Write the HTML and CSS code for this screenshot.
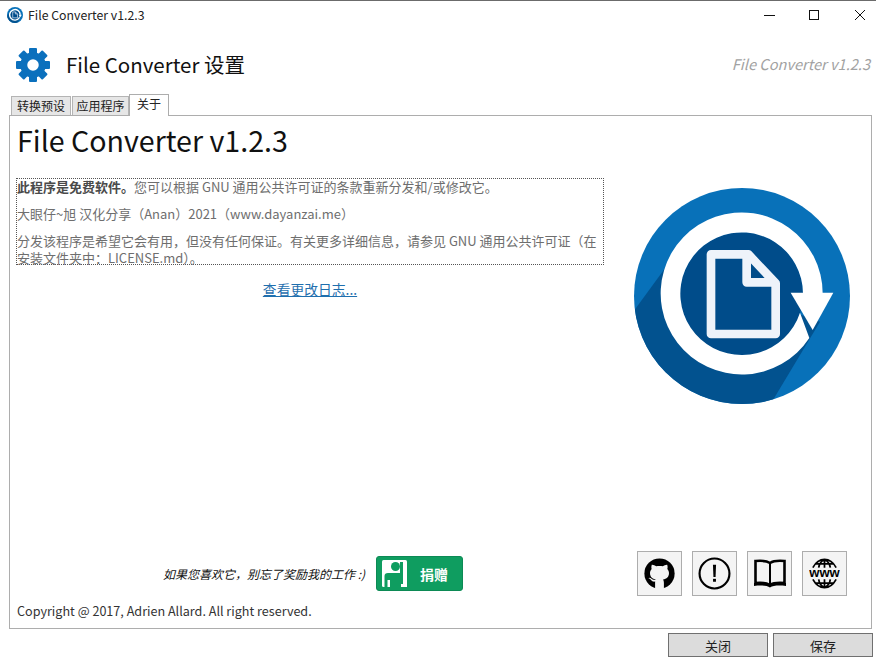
FILE: index.html
```html
<!DOCTYPE html>
<html lang="zh">
<head>
<meta charset="utf-8">
<title>File Converter v1.2.3</title>
<link rel="stylesheet" href="styles.css">
</head>
<body>
<svg class="defs" width="0" height="0" aria-hidden="true">
  <defs>
    <clipPath id="disc"><circle cx="366" cy="363" r="324"/></clipPath>
    <symbol id="logo" viewBox="42 39 648 648">
      <circle cx="366" cy="363" r="324" fill="#0871b9"/>
      <polygon clip-path="url(#disc)" points="135,280 40,410 40,690 450,690 600,440 365,356" fill="#02528f"/>
      <circle cx="365" cy="356" r="184" fill="#004c8a"/>
      <path d="M608 356 A243 243 0 1 0 568 489 L540 413 A184 184 0 1 1 549 356 Z" fill="#fff"/>
      <polygon points="512,353 640,353 578,465" fill="#fff"/>
      <path d="M273 238 H385 L467 325 V477 H273 Z" fill="#004c8a" stroke="#eef3fa" stroke-width="26" stroke-linejoin="round"/>
      <path d="M380 238 V322 H467" fill="none" stroke="#eef3fa" stroke-width="26" stroke-linejoin="round"/>
    </symbol>
  </defs>
</svg>
<div class="window">
  <div class="titlebar">
    <svg class="app-icon"><use href="#logo"/></svg>
    <span class="title-text">File Converter v1.2.3</span>
    <div class="controls">
      <svg class="ctrl" viewBox="0 0 12 12"><path d="M0 6.500H11" stroke="#111" fill="none"/></svg>
      <svg class="ctrl" viewBox="0 0 12 12"><rect x="0.500" y="1.500" width="9" height="9" stroke="#111" fill="none"/></svg>
      <svg class="ctrl" viewBox="0 0 12 12"><path d="M1 1L11 11M11 1L1 11" stroke="#111" fill="none"/></svg>
    </div>
  </div>
  <header class="header">
    <svg class="gear" viewBox="0 0 34 34">
      <g fill="#0b70bd">
        <rect x="13" y="0" width="8" height="7" rx="1"/>
        <rect x="13" y="0" width="8" height="7" rx="1" transform="rotate(45 17 17)"/>
        <rect x="13" y="0" width="8" height="7" rx="1" transform="rotate(90 17 17)"/>
        <rect x="13" y="0" width="8" height="7" rx="1" transform="rotate(135 17 17)"/>
        <rect x="13" y="0" width="8" height="7" rx="1" transform="rotate(180 17 17)"/>
        <rect x="13" y="0" width="8" height="7" rx="1" transform="rotate(225 17 17)"/>
        <rect x="13" y="0" width="8" height="7" rx="1" transform="rotate(270 17 17)"/>
        <rect x="13" y="0" width="8" height="7" rx="1" transform="rotate(315 17 17)"/>
      </g>
      <circle cx="17" cy="17" r="9.250" fill="none" stroke="#0b70bd" stroke-width="7"/>
    </svg>
    <h1 class="header-title">File Converter 设置</h1>
    <span class="header-version">File Converter v1.2.3</span>
  </header>
  <nav class="tabs">
    <span class="tab first">转换预设</span>
    <span class="tab second">应用程序</span>
    <span class="tab active">关于</span>
  </nav>
  <main class="panel">
    <div class="about">
      <div class="about-left">
        <h2 class="heading">File Converter v1.2.3</h2>
        <div class="notice">
          <p class="line"><b>此程序是免费软件。</b>您可以根据 GNU 通用公共许可证的条款重新分发和/或修改它。</p>
          <p class="line">大眼仔~旭 汉化分享（Anan）2021（www.dayanzai.me）</p>
          <p class="line para">分发该程序是希望它会有用，但没有任何保证。有关更多详细信息，请参见 GNU 通用公共许可证（在<br>安装文件夹中：LICENSE.md）。</p>
        </div>
        <a class="changelog" href="#">查看更改日志...</a>
      </div>
      <svg class="logo"><use href="#logo"/></svg>
    </div>
    <div class="actions">
      <span class="donate-text">如果您喜欢它，别忘了奖励我的工作 :)</span>
      <button class="donate">
        <svg class="donate-icon" viewBox="0 0 25 27">
          <rect width="25" height="27" rx="1.500" fill="#fff"/>
          <circle cx="13.500" cy="6.500" r="4.500" fill="#0f9d60"/>
          <path d="M2.500 27V16Q2.500 13 6 13H18V2H21V24H19V27Z" fill="#0f9d60"/>
          <rect x="5.500" y="20" width="2.500" height="7" fill="#fff"/>
          <rect x="21" y="24" width="4" height="3" fill="#fff"/>
        </svg>
        <span>捐赠</span>
      </button>
      <div class="icon-buttons">
        <button class="icon-btn">
          <svg viewBox="0 0 24 24" class="ico">
            <circle cx="12" cy="12" r="11" fill="#000"/>
            <path fill="#f4f4f4" d="M6.400 5.600C7.400 5.500 8.700 6.100 9.600 6.800C10.400 6.600 11.200 6.500 12 6.500C12.800 6.500 13.600 6.600 14.400 6.800C15.300 6.100 16.600 5.500 17.600 5.600C18 6.700 18 7.800 17.700 8.700C18.500 9.600 18.900 10.600 18.900 11.700C18.900 14.600 17.200 16 14.600 16.400C15 17 15.200 17.800 15.200 18.800V24H8.800V18.800C8.800 18.500 8.800 18.200 8.900 17.900C7.500 18.200 6.500 17.600 5.900 16.800C5.300 16 4.700 15.600 4 15.700C4.400 14.800 5.400 15.200 6 15.700C6.600 16.300 7.600 16.800 9.200 16.600L9.400 16.400C6.800 16 5.100 14.600 5.100 11.700C5.100 10.600 5.500 9.600 6.300 8.700C6 7.800 6 6.700 6.400 5.600Z"/>
          </svg>
        </button>
        <button class="icon-btn">
          <svg viewBox="0 0 34 34" class="ico">
            <circle cx="17" cy="17" r="15.400" fill="none" stroke="#000" stroke-width="2.200"/>
            <path d="M15.400 8H18.600L18.100 20.500H15.900Z" fill="#000"/>
            <rect x="15.500" y="22.500" width="3" height="3" fill="#000"/>
          </svg>
        </button>
        <button class="icon-btn">
          <svg viewBox="0 0 34 30" class="ico book">
            <path d="M17 4C14 2 8 1.500 2.500 2V24C8 23.500 14 24 17 26C20 24 26 23.500 31.500 24V2C26 1.500 20 2 17 4Z" fill="none" stroke="#000" stroke-width="2.600"/>
            <path d="M17 4V27" stroke="#000" stroke-width="2"/>
            <path d="M1 24V27C8 26 14 26.500 17 28.500C20 26.500 26 26 33 27V24C26 23.500 20 24 17 26C14 24 8 23.500 1 24Z" fill="#000"/>
          </svg>
        </button>
        <button class="icon-btn">
          <svg viewBox="0 0 32 32" class="ico www">
            <path d="M4 10C7 4.500 11 1.500 16 1.500C21 1.500 25 4.500 28 10M4 22C7 27.500 11 30.500 16 30.500C21 30.500 25 27.500 28 22M16 1.500V10M16 22V30.500M10 10C10.500 6 13 3 16 1.500C19 3 21.500 6 22 10M10 22C10.500 26 13 29 16 30.500C19 29 21.500 26 22 22M7 6H25M7 26H25" fill="none" stroke="#000" stroke-width="1.800"/>
            <text x="16" y="20" text-anchor="middle" class="www-text">www</text>
          </svg>
        </button>
      </div>
    </div>
    <p class="copyright">Copyright @ 2017, Adrien Allard. All right reserved.</p>
  </main>
  <footer class="footer">
    <button class="btn">关闭</button>
    <button class="btn">保存</button>
  </footer>
</div>
</body>
</html>
```

FILE: styles.css
```css
* { box-sizing: border-box; }
html, body { margin: 0; padding: 0; background: #fff; }
body {
  font-family: "Noto Sans CJK SC", "Noto Sans", sans-serif;
  color: #111;
}
.defs { display: block; height: 0; }
.window {
  width: 876px;
  height: 660px;
  display: flex;
  flex-direction: column;
  border-top: 1px solid #6b6b6b;
  overflow: hidden;
}
.titlebar {
  height: 28px;
  display: flex;
  align-items: center;
  padding-left: 7px;
  flex: none;
}
.app-icon { width: 16px; height: 16px; }
.title-text { margin-left: 5px; font-size: 12.300px; color: #222; }
.controls {
  margin-left: auto;
  display: flex;
  gap: 33px;
  padding-right: 10px;
}
.ctrl { width: 12px; height: 12px; display: block; overflow: visible; }
.header {
  flex: none;
  height: 66px;
  display: flex;
  align-items: center;
  padding: 6px 6px 0 16px;
}
.gear { width: 34px; height: 34px; flex: none; }
.header-title {
  margin: 0 0 2px 16px;
  font-size: 20.500px;
  font-weight: 400;
  color: #111;
}
.header-version {
  margin: 0 0 4px auto;
  font-size: 14.600px;
  font-style: italic;
  color: #a2a2a2;
}
.tabs {
  flex: none;
  height: 20px;
  display: flex;
  align-items: flex-end;
  padding-left: 11px;
  position: relative;
  z-index: 1;
}
.tab {
  height: 19px;
  margin-right: 1px;
  background: #e6e6e6;
  border: 1px solid #b4b4b4;
  border-bottom: 0;
  font-size: 12px;
  line-height: 18px;
  color: #222;
  text-align: center;
}
.tab.first { width: 60px; }
.tab.second { width: 57px; margin-right: 0; }
.tab.active {
  height: 22px;
  width: 40px;
  margin: 0 0 -1px 0;
  background: #fff;
  border-color: #adadad;
  line-height: 17px;
}
.panel {
  flex: none;
  width: 863px;
  height: 514px;
  margin-left: 9px;
  border: 1px solid #adadad;
  background: #fff;
  display: flex;
  flex-direction: column;
  padding: 0 0 0 6px;
}
.about { display: flex; flex: 1; }
.about-left { width: 588px; flex: none; }
.heading {
  margin: 4px 0 0 1px;
  font-size: 28.600px;
  line-height: 40px;
  font-weight: 400;
  color: #111;
}
.notice {
  margin-top: 18px;
  height: 87px;
  border: 1px dotted #555;
  font-size: 13px;
  color: #6e6e6e;
}
.line { margin: 0; line-height: 17px; padding-bottom: 10px; white-space: nowrap; }
.line:first-child { margin-top: -1px; }
.line b { color: #4a4a4a; font-weight: 700; }
.line.para { padding-bottom: 0; }
.changelog {
  display: block;
  text-align: center;
  margin: 15px 0 0 2px;
  width: 584px;
  font-size: 13.800px;
  line-height: 19px;
  color: #1f6fae;
  text-decoration: underline;
}
.logo { width: 216px; height: 216px; margin: 72px 0 0 30px; flex: none; }
.actions {
  display: flex;
  align-items: center;
  height: 45px;
  flex: none;
}
.donate-text {
  margin-left: 147px;
  font-size: 12px;
  font-style: italic;
  color: #111;
  width: 213px;
  white-space: nowrap;
}
.donate {
  width: 87px;
  height: 35px;
  margin: 0;
  border: 1px solid #0c8a55;
  border-radius: 3px;
  background: #0f9d60;
  color: #fff;
  font: 700 14px "Noto Sans CJK SC", sans-serif;
  display: flex;
  align-items: center;
  padding: 0 0 0 5px;
  gap: 13px;
}
.donate-icon { width: 25px; height: 27px; flex: none; }
.icon-buttons { display: flex; gap: 10px; margin-left: 174px; }
.icon-btn {
  width: 45px;
  height: 45px;
  padding: 0;
  border: 1px solid #adadad;
  background: #f4f4f4;
  display: flex;
  align-items: center;
  justify-content: center;
}
.ico { width: 33px; height: 33px; display: block; }
.ico.book { width: 34px; height: 30px; }
.ico.www { width: 31px; height: 31px; }
.www-text { font: 700 13.500px "Liberation Sans", sans-serif; fill: #000; }
.copyright {
  margin: 6px 0 8px 1px;
  font-size: 12.600px;
  line-height: 18px;
  color: #333;
}
.footer {
  flex: none;
  display: flex;
  justify-content: flex-end;
  gap: 5px;
  padding: 4px 3px 0 0;
}
.btn {
  width: 100px;
  height: 24px;
  padding: 0;
  border: 1px solid #707070;
  background: #dcdcdc;
  font: 13px "Noto Sans CJK SC", sans-serif;
  color: #222;
}
```
